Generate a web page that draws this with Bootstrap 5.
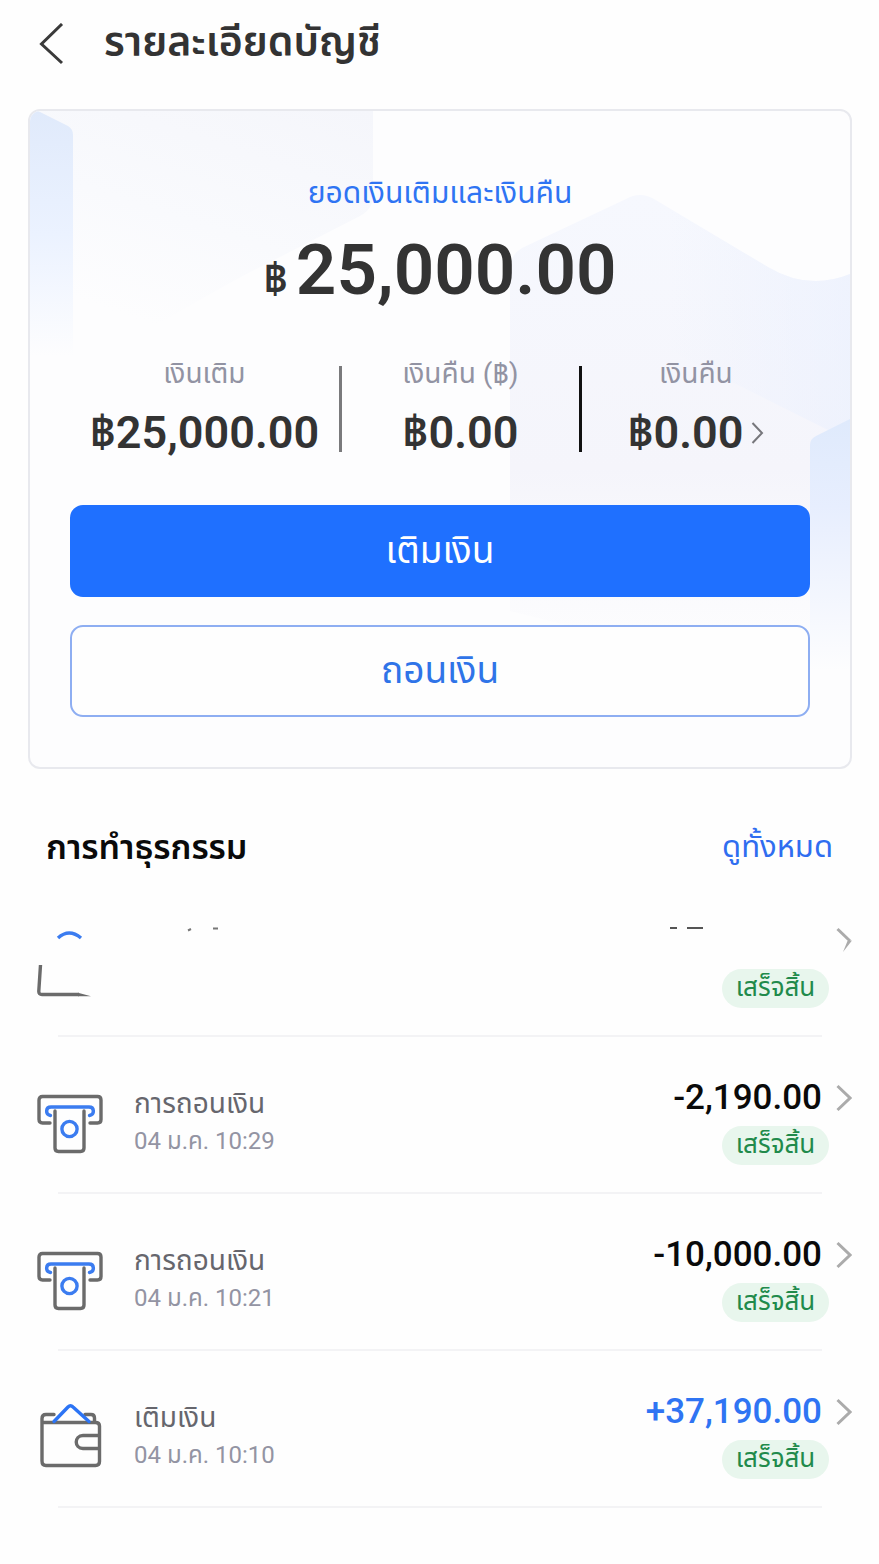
<!DOCTYPE html>
<html lang="th">
<head>
<meta charset="utf-8">
<meta name="viewport" content="width=device-width, initial-scale=1">
<title>รายละเอียดบัญชี</title>
<link href="https://cdn.jsdelivr.net/npm/bootstrap@5.3.0/dist/css/bootstrap.min.css" rel="stylesheet">
<style>
  body { font-family: Roboto, "Noto Sans Thai", "Noto Sans", "Open Sans", sans-serif; background: #fefefe; color: #333; }
  svg { display: block; flex: none; }
  a { text-decoration: none; color: inherit; }
  .topbar { height: 109px; padding: 18px 38px; gap: 40px; }
  .topbar h1 { font-size: 41px; line-height: 48px; font-weight: 600; }
  .back { border: 0; background: none; padding: 5px 0 0; }
  .balance { margin: 0 27px 0 28px; border: 2px solid #e8e9ee; border-radius: 12px; background: #fdfdfe; overflow: hidden; }
  .balance-body { padding: 62px 40px 50px; position: relative; }
  .backdrop { position: absolute; inset: 0; width: 100%; height: 100%; }
  .caption-top { font-size: 30px; line-height: 40px; color: #2f74f3; }
  .total { font-size: 71px; line-height: 84px; font-weight: 600; margin-top: 15px; gap: 8px; }
  .total small { font-size: 42px; }
  .stats { margin: 44px 0 53px; }
  .stat + .stat { border-left: 3px solid #7a7a7c; }
  .stat + .stat + .stat { border-color: #111; }
  .stat { flex: 239 1 0; height: 86px; }
  .stat:first-child { flex-grow: 271; }
  .stat:last-child { flex-grow: 230; }
  .stat-label { font-size: 28px; line-height: 36px; margin-top: -10px; color: #9293a3; }
  .stat-value { font-size: 45px; line-height: 54px; margin-top: 14px; font-weight: 600; gap: 8px; }
  .action { height: 92px; border-radius: 13px; font-size: 37px; line-height: 44px; border-width: 2px; }
  .action-fill { --bs-btn-bg: #1f70ff; --bs-btn-border-color: #1f70ff; }
  .action-line { --bs-btn-color: #2f74e8; --bs-btn-border-color: #8eaef2; margin-top: 28px; background: #fefefe; }
  .section-head { padding: 54px 46px 0 46px; height: 111px; }
  .section-head h2 { font-size: 34px; line-height: 48px; font-weight: 600; color: #0a0a0a; }
  .section-head a { font-size: 31px; line-height: 48px; color: #2f6df0; }
  .tx-list { padding: 0 27px 0 37px; }
  .tx { height: 155px; padding-top: 37px; }
  .tx-icon { margin: 14px 31px 0 0; }
  .tx-text { padding-top: 11px; }
  .tx-name { font-size: 28px; line-height: 38px; color: #66666d; }
  .tx-date { font-size: 24px; line-height: 36px; color: #9394a3; }
  .tx-amount { font-size: 35px; line-height: 48px; font-weight: 500; color: #0a0a0a; margin-right: 7px; }
  .tx-plus { color: #2f74f3; }
  .status { height: 39px; min-width: 107px; margin-top: 4px; padding: 0 12px; border-radius: 20px; background: #e8f6ed; color: #218a4b; font-size: 26px; line-height: 37px; font-weight: 400; }
  .tx-go { margin: 10px 0 0 7px; }
  .rule { height: 2px; margin: 0 30px 0 21px; background: #f3f3f5; }
</style>
</head>
<body>
<svg width="0" height="0" class="position-absolute" aria-hidden="true">
  <symbol id="atm" viewBox="0 0 66 66">
    <g fill="none" stroke="#6b6b6b" stroke-width="3.4" stroke-linecap="round" stroke-linejoin="round">
      <path d="M13 35H5.500Q2 35 2 31.500V12Q2 8.500 5.500 8.500H60.500Q64 8.500 64 12V31.500Q64 35 60.500 35H53"/>
      <path d="M18 23V60Q18 63.500 21.500 63.500H43.500Q47 63.500 47 60V23"/>
      <path stroke="#3b7cf0" d="M13.500 27.500C8 26.500 8.500 19 14 19H52C57.500 19 58 26.500 52.500 27.500"/>
      <circle stroke="#3b7cf0" cx="32.500" cy="41" r="7.600"/>
    </g>
  </symbol>
  <symbol id="wallet" viewBox="0 0 66 66">
    <g fill="none" stroke="#6b6b6b" stroke-width="3.400" stroke-linecap="round" stroke-linejoin="round">
      <path d="M17 12.500H9Q5 12.500 5 16.500V59Q5 63.500 9 63.500H58.500Q62.500 63.500 62.500 59.500V24Q62.500 20.500 58.500 20.500H6"/>
      <path d="M48 12.500H54Q57.500 12.500 57.500 16V20"/>
      <path d="M62 33.500H46C37 33.500 37 46.500 46 46.500H62"/>
      <path stroke="#2c74f5" d="M17 19.500L31 5Q33.500 2.500 36 5L52 19.500"/>
    </g>
  </symbol>
  <symbol id="go" viewBox="0 0 16 28"><path d="M1.500 2L14 14L1.500 26" fill="none" stroke="#ababab" stroke-width="3"/></symbol>
</svg>

<header class="topbar d-flex align-items-start">
  <button class="back" type="button" aria-label="ย้อนกลับ">
    <svg width="26" height="42" viewBox="0 0 26 42"><path d="M24 1L3.500 21L24 40" fill="none" stroke="#3a3a3a" stroke-width="3"/></svg>
  </button>
  <h1 class="m-0">รายละเอียดบัญชี</h1>
</header>

<main>
  <section class="balance">
    <div class="balance-body">
      <svg class="backdrop" viewBox="0 0 820 656" preserveAspectRatio="none" aria-hidden="true">
        <defs>
          <linearGradient id="g1" x1="0" y1="0" x2="0" y2="1"><stop offset="0" stop-color="#e0eafb"/><stop offset=".5" stop-color="#ebf2ff"/><stop offset="1" stop-color="#fdfdfe"/></linearGradient>
          <linearGradient id="g2" x1="1" y1="0" x2=".5" y2="1"><stop offset="0" stop-color="#f5f6fb"/><stop offset=".6" stop-color="#f9fafd"/><stop offset="1" stop-color="#fdfdfe"/></linearGradient>
          <linearGradient id="g3" x1="0" y1="0" x2="0" y2="1"><stop offset="0" stop-color="#f6f8fe"/><stop offset=".6" stop-color="#f5f5fb"/><stop offset="1" stop-color="#fdfdfe"/></linearGradient>
          <linearGradient id="g4" x1="0" y1="0" x2="0" y2="1"><stop offset="0" stop-color="#dfeafc"/><stop offset=".35" stop-color="#e7eefe"/><stop offset="1" stop-color="#fdfdfe"/></linearGradient>
          <linearGradient id="g5" x1="0" y1="0" x2="1" y2="0"><stop offset="0" stop-color="#eaf0fe" stop-opacity="0"/><stop offset="1" stop-color="#eaf0fe"/></linearGradient>
        </defs>
        <path fill="url(#g2)" d="M0 0H343V85Q343 98 330 105L250 146Q200 170 100 230H0Z"/>
        <path fill="url(#g1)" d="M0 0H8L38 15Q43 18 43 24V245H0Z"/>
        <path fill="url(#g3)" d="M480 500V158Q480 144 492 137L596 88Q610 80 624 88L738 156Q778 180 820 163V540H640Z"/>
        <path fill="url(#g5)" d="M640 98L738 156Q778 180 820 163V330L640 240Z" opacity=".6"/>
        <path fill="url(#g4)" d="M780 560V334Q780 328 786 325L820 308V560Z"/>
      </svg>
      <div class="position-relative">
        <div class="caption-top text-center">ยอดเงินเติมและเงินคืน</div>
        <div class="total d-flex justify-content-center align-items-baseline"><small>฿</small><span>25,000.00</span></div>
        <div class="stats d-flex text-center">
          <div class="stat"><div class="stat-label">เงินเติม</div><div class="stat-value">฿25,000.00</div></div>
          <div class="stat"><div class="stat-label">เงินคืน (฿)</div><div class="stat-value">฿0.00</div></div>
          <div class="stat"><div class="stat-label">เงินคืน</div>
            <a href="#" class="stat-value d-flex justify-content-center align-items-center">฿0.00<svg width="13" height="22" viewBox="0 0 13 22"><path d="M1.500 1L11 11L1.500 21" fill="none" stroke="#77777c" stroke-width="2"/></svg></a></div>
        </div>
        <button type="button" class="btn btn-primary action action-fill d-block w-100">เติมเงิน</button>
        <button type="button" class="btn btn-outline-primary action action-line d-block w-100">ถอนเงิน</button>
      </div>
    </div>
  </section>

  <section>
    <div class="section-head d-flex justify-content-between">
      <h2 class="m-0">การทำธุรกรรม</h2>
      <a href="#">ดูทั้งหมด</a>
    </div>
    <ul class="tx-list list-unstyled m-0">
      <li>
        <a href="#" class="tx d-flex align-items-start" aria-label="เสร็จสิ้น">
          <svg class="tx-icon" width="66" height="66" viewBox="0 0 66 66" fill="none"><path d="M21 7Q32 -3 44 7" stroke="#3b7cf0" stroke-width="3.400"/><path d="M3.500 34L1.800 60Q1.600 63.500 5 63.500H42" stroke="#6b6b6b" stroke-width="3.400"/><path d="M41 61.800L54 65.200H41Z" fill="#6b6b6b"/></svg>
          <svg class="me-auto" width="90" height="20" viewBox="0 0 90 20"><path d="M54 13.500L57 12M79 11.500H84" stroke="#777" stroke-width="2"/></svg>
          <div class="d-flex flex-column align-items-end">
            <svg class="tx-amount" width="153" height="48" viewBox="0 0 153 48"><path d="M1 11H8M18 11H34" stroke="#555" stroke-width="2"/></svg>
            <span class="status text-center">เสร็จสิ้น</span>
          </div>
          <svg class="tx-go" width="16" height="28" viewBox="0 0 16 28"><path d="M1.500 2L14 14" stroke="#ababab" stroke-width="3"/><path d="M16 13.500L7 25L11.500 14Z" fill="#ababab"/></svg>
        </a>
        <div class="rule"></div>
      </li>
      <li>
        <a href="#" class="tx d-flex align-items-start">
          <svg class="tx-icon" width="66" height="66"><use href="#atm"/></svg>
          <div class="tx-text me-auto"><div class="tx-name">การถอนเงิน</div><div class="tx-date">04 ม.ค. 10:29</div></div>
          <div class="d-flex flex-column align-items-end"><div class="tx-amount">-2,190.00</div><span class="status text-center">เสร็จสิ้น</span></div>
          <svg class="tx-go" width="16" height="28"><use href="#go"/></svg>
        </a>
        <div class="rule"></div>
      </li>
      <li>
        <a href="#" class="tx d-flex align-items-start">
          <svg class="tx-icon" width="66" height="66"><use href="#atm"/></svg>
          <div class="tx-text me-auto"><div class="tx-name">การถอนเงิน</div><div class="tx-date">04 ม.ค. 10:21</div></div>
          <div class="d-flex flex-column align-items-end"><div class="tx-amount">-10,000.00</div><span class="status text-center">เสร็จสิ้น</span></div>
          <svg class="tx-go" width="16" height="28"><use href="#go"/></svg>
        </a>
        <div class="rule"></div>
      </li>
      <li>
        <a href="#" class="tx d-flex align-items-start">
          <svg class="tx-icon" width="66" height="66"><use href="#wallet"/></svg>
          <div class="tx-text me-auto"><div class="tx-name">เติมเงิน</div><div class="tx-date">04 ม.ค. 10:10</div></div>
          <div class="d-flex flex-column align-items-end"><div class="tx-amount tx-plus">+37,190.00</div><span class="status text-center">เสร็จสิ้น</span></div>
          <svg class="tx-go" width="16" height="28"><use href="#go"/></svg>
        </a>
        <div class="rule"></div>
      </li>
    </ul>
  </section>
</main>
<script src="https://cdn.jsdelivr.net/npm/bootstrap@5.3.0/dist/js/bootstrap.bundle.min.js"></script>
</body>
</html>
